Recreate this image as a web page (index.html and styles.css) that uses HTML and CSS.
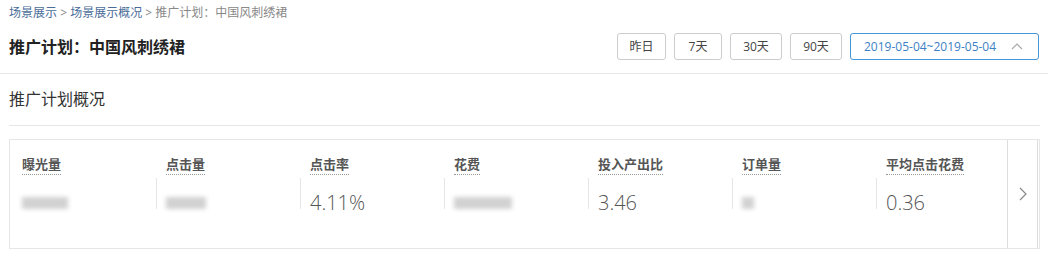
FILE: index.html
```html
<!DOCTYPE html>
<html lang="zh-CN">
<head>
    <meta charset="UTF-8">
    <title>推广计划：中国风刺绣裙</title>
    <link rel="stylesheet" href="styles.css">
</head>
<body>
    <div class="header">
        <div class="crumbs">
            <a href="#">场景展示</a> &gt; <a href="#">场景展示概况</a> &gt; <span>推广计划：中国风刺绣裙</span>
        </div>
        <div class="title-row">
            <h1>推广计划：中国风刺绣裙</h1>
            <div class="ranges">
                <button class="btn w49">昨日</button>
                <button class="btn w48">7天</button>
                <button class="btn w52">30天</button>
                <button class="btn w52">90天</button>
                <button class="btn date">2019-05-04~2019-05-04
                    <svg width="12" height="8" viewBox="0 0 12 8"><path d="M1 7 L6 2 L11 7" fill="none" stroke="#aaa" stroke-width="1.2"/></svg>
                </button>
            </div>
        </div>
    </div>

    <div class="section">
        <h2>推广计划概况</h2>
        <div class="card">
            <div class="metrics">
                <div class="metric">
                    <div class="label">曝光量</div>
                    <div class="value"><span class="blur" style="width: 46px"></span></div>
                </div>
                <div class="metric">
                    <div class="label">点击量</div>
                    <div class="value"><span class="blur" style="width: 40px"></span></div>
                </div>
                <div class="metric">
                    <div class="label">点击率</div>
                    <div class="value">4.11%</div>
                </div>
                <div class="metric">
                    <div class="label">花费</div>
                    <div class="value"><span class="blur" style="width: 58px"></span></div>
                </div>
                <div class="metric">
                    <div class="label">投入产出比</div>
                    <div class="value">3.46</div>
                </div>
                <div class="metric">
                    <div class="label">订单量</div>
                    <div class="value"><span class="blur" style="width: 12px"></span></div>
                </div>
                <div class="metric">
                    <div class="label">平均点击花费</div>
                    <div class="value">0.36</div>
                </div>
            </div>
            <div class="next">
                <svg width="10" height="16" viewBox="0 0 10 16"><path d="M2 2 L8 8 L2 14" fill="none" stroke="#888" stroke-width="1.2"/></svg>
            </div>
        </div>
    </div>
</body>
</html>
```

FILE: styles.css
```css
body {
    margin: 0;
    font-family: "Open Sans", "Noto Sans CJK SC", sans-serif;
    color: #333;
    background: #fff;
}
.header {
    padding: 3px 9px 0 9px;
    border-bottom: 1px solid #e8e8e8;
}
.crumbs {
    font-size: 12px;
    line-height: 20px;
    color: #888;
}
.crumbs a {
    color: #4a6d99;
    text-decoration: none;
}
.title-row {
    display: flex;
    justify-content: space-between;
    align-items: center;
    height: 46px;
    padding-bottom: 4px;
}
h1 {
    margin: 0;
    font-size: 16px;
    font-weight: bold;
    color: #222;
}
.ranges {
    display: flex;
    gap: 8px;
}
.btn {
    height: 27px;
    padding: 0;
    border: 1px solid #ccc;
    border-radius: 3px;
    background: #fff;
    font-family: inherit;
    font-size: 12px;
    color: #444;
    cursor: pointer;
}
.w49 { width: 49px; }
.w48 { width: 48px; }
.w52 { width: 52px; }
.btn.date {
    width: 189px;
    display: flex;
    align-items: center;
    justify-content: space-between;
    padding: 0 15px 0 13px;
    border-color: #4597d8;
    color: #3c7fc4;
}
.section {
    padding: 0 8px 0 9px;
}
h2 {
    margin: 0;
    font-size: 16px;
    font-weight: normal;
    color: #333;
    line-height: 51px;
    border-bottom: 1px solid #e6e6e6;
}
.card {
    display: flex;
    margin-top: 13px;
    height: 108px;
    border: 1px solid #e6e6e6;
}
.metrics {
    flex: 1;
    display: grid;
    grid-template-columns: repeat(7, 144px);
    padding: 12px 0 0 12px;
    overflow: hidden;
}
.metric {
    position: relative;
}
.metric + .metric::before {
    content: "";
    position: absolute;
    left: -10px;
    top: 26px;
    height: 31px;
    border-left: 1px solid #e6e6e6;
}
.label {
    display: inline-block;
    font-size: 13px;
    font-weight: bold;
    color: #555;
    line-height: 20px;
    border-bottom: 1px dotted #999;
}
.value {
    margin-top: 13px;
    height: 30px;
    font-size: 20px;
    color: #555;
    font-weight: 300;
    line-height: 30px;
    display: flex;
    align-items: center;
}
.blur {
    display: inline-block;
    height: 12px;
    background: #d2d2d2;
    filter: blur(2px);
}
.next {
    flex: none;
    width: 29px;
    margin-right: 1px;
    display: flex;
    align-items: center;
    justify-content: center;
    border-left: 1px solid #ddd;
    border-right: 1px solid #ddd;
}
```
